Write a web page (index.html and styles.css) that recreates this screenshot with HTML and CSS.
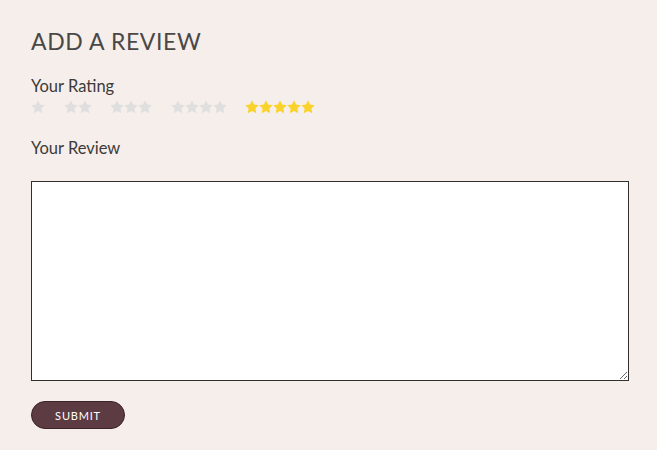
FILE: index.html
```html
<!DOCTYPE html>
<html lang="en">
<head>
  <meta charset="UTF-8">
  <title>Add a Review</title>
  <link rel="stylesheet" href="styles.css">
</head>
<body>

<svg width="0" height="0" class="defs">
  <symbol id="star" viewBox="0 0 24 24">
    <path d="M12 .6l3.6 7.2 7.9 1.2-5.7 5.6 1.4 7.9L12 18.7l-7.2 3.8 1.4-7.9L.5 9l7.9-1.2z"/>
  </symbol>
</svg>

<form class="review-form">
  <h1>ADD A REVIEW</h1>

  <div class="label">Your Rating</div>
  <div class="rating" id="rating"></div>

  <label class="label review-label" for="review">Your Review</label>
  <textarea id="review"></textarea>

  <button type="button" class="submit">SUBMIT</button>
</form>

<script>
const rating = document.getElementById("rating");
for (let n = 1; n <= 5; n++) {
  const group = document.createElement("a");
  group.className = "stars" + (n === 5 ? " active" : "");
  for (let i = 0; i < n; i++) {
    group.innerHTML += '<svg class="star"><use href="#star"/></svg>';
  }
  rating.appendChild(group);
}
</script>

</body>
</html>
```

FILE: styles.css
```css
body {
  margin: 0;
  background: #f6eeeb;
  font-family: Lato, "Open Sans", sans-serif;
  color: #3d3a39;
}
.defs { position: absolute; }
.review-form {
  padding: 25px 28px 0 31px;
  display: flex;
  flex-direction: column;
  align-items: flex-start;
}
h1 {
  margin: 0;
  font-size: 23px;
  font-weight: 400;
  letter-spacing: 0.6px;
  line-height: 32px;
  color: #4a4746;
}
.label {
  font-size: 16.5px;
  line-height: 20px;
  margin-top: 19px;
}
.review-label { margin-top: 24px; }
.rating {
  display: flex;
  gap: 18.5px;
  margin-top: 4px;
}
.stars {
  display: flex;
  fill: #dfdfdf;
}
.stars.active { fill: #f9d22c; }
.star {
  width: 14px;
  height: 14px;
}
textarea {
  box-sizing: border-box;
  width: 598px;
  height: 200px;
  margin-top: 23px;
  border: 1px solid #332f2e;
  background: #fff;
}
.submit {
  margin-top: 20px;
  width: 94px;
  height: 28px;
  border-radius: 14px;
  border: 1px solid #3a2428;
  background: #5d3b43;
  color: #fff;
  font-family: Lato, sans-serif;
  font-size: 11px;
  letter-spacing: 0.8px;
  padding: 0;
}
```
